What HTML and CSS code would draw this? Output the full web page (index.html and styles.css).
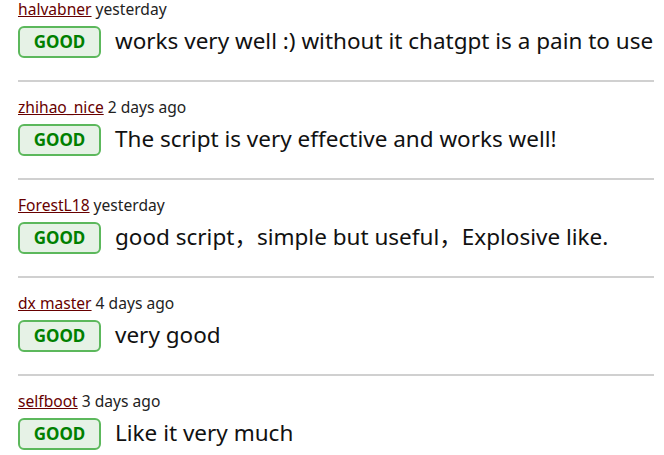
FILE: index.html
```html
<!DOCTYPE html>
<html>
<head>
<meta charset="utf-8">
<link rel="stylesheet" href="styles.css">
</head>
<body>
<ul class="feedback-list">
  <li class="feedback">
    <div class="meta"><a class="user" href="#">halvabner</a> yesterday</div>
    <div class="review"><span class="badge">GOOD</span><span class="text">works very well :) without it chatgpt is a pain to use</span></div>
  </li>
  <li class="feedback">
    <div class="meta"><a class="user" href="#">zhihao_nice</a> 2 days ago</div>
    <div class="review"><span class="badge">GOOD</span><span class="text">The script is very effective and works well!</span></div>
  </li>
  <li class="feedback">
    <div class="meta"><a class="user" href="#">ForestL18</a> yesterday</div>
    <div class="review"><span class="badge">GOOD</span><span class="text">good script，simple but useful，Explosive like.</span></div>
  </li>
  <li class="feedback">
    <div class="meta"><a class="user" href="#">dx master</a> 4 days ago</div>
    <div class="review"><span class="badge">GOOD</span><span class="text">very good</span></div>
  </li>
  <li class="feedback">
    <div class="meta"><a class="user" href="#">selfboot</a> 3 days ago</div>
    <div class="review"><span class="badge">GOOD</span><span class="text">Like it very much</span></div>
  </li>
</ul>
</body>
</html>
```

FILE: styles.css
```css
html, body {
  margin: 0;
  padding: 0;
  background: #fff;
}
body {
  font-family: "Noto Sans", "Noto Sans CJK SC", sans-serif;
  color: #222;
}
.feedback-list {
  list-style: none;
  margin: -16px 10px 0 18px;
  padding: 0;
}
.feedback {
  padding: 14px 0 22px;
  border-bottom: 2px solid #d0d0d0;
}
.meta {
  font-size: 15.6px;
  line-height: 22px;
  color: #222;
}
.user {
  color: #670000;
  text-decoration: underline;
}
.review {
  display: flex;
  align-items: center;
  margin-top: 6px;
}
.badge {
  box-sizing: border-box;
  width: 83px;
  height: 32px;
  border: 2px solid #5cb85c;
  border-radius: 6px;
  background: #e6f2e6;
  color: #008000;
  font-weight: bold;
  font-size: 17px;
  line-height: 28px;
  text-align: center;
  flex: none;
}
.text {
  margin-left: 14px;
  margin-bottom: 2px;
  font-size: 22.5px;
  line-height: 30px;
  color: #111;
  white-space: nowrap;
}
```
